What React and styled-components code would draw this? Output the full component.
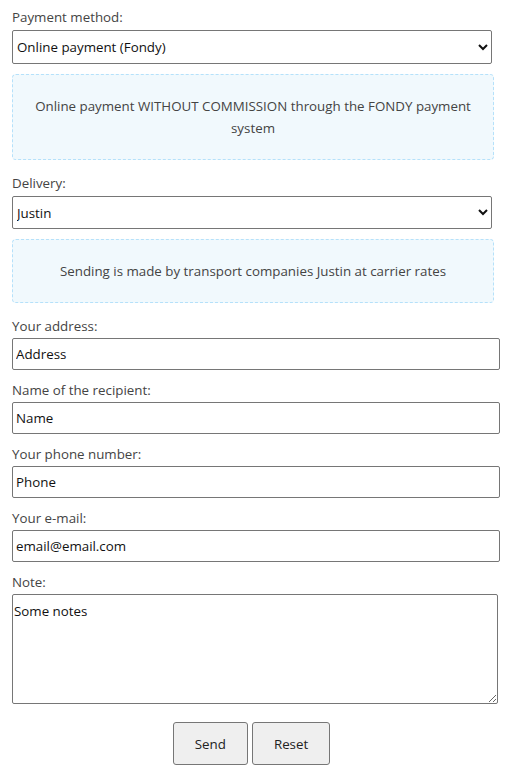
import React from "react";
import styled, { createGlobalStyle } from "styled-components";

const Global = createGlobalStyle`
  html, body { margin: 0; padding: 0; background: #fff; }
  body { font-family: "Open Sans", "Noto Sans", sans-serif; font-size: 13.33px; color: #333; }
`;

const Form = styled.form`
  display: flex;
  flex-direction: column;
  padding: 8px 12px 12px 12px;
  width: 511px;
  box-sizing: border-box;
`;

const Field = styled.div`
  display: flex;
  flex-direction: column;
  margin-bottom: ${(p) => p.$mb ?? 11}px;
`;

const Label = styled.label`
  display: block;
  font-size: 13.33px;
  line-height: 18px;
  color: #444;
  margin-bottom: ${(p) => p.$mb ?? 3}px;
`;

const Select = styled.select`
  width: 480px;
  height: ${(p) => p.$h ?? 34}px;
  box-sizing: border-box;
  font-family: "Open Sans", "Noto Sans", sans-serif;
  font-size: 13.33px;
  color: #111;
  background: #fff;
  border: 1px solid #767676;
  border-radius: 2px;
  padding: 0;
  margin: 0;
`;

const Info = styled.div`
  width: 482px;
  box-sizing: border-box;
  margin-top: 10px;
  padding: 20px 16px;
  background: #f1f9fd;
  border: 1px dashed #b5e1fa;
  border-radius: 4px;
  text-align: center;
  font-size: 13.33px;
  line-height: 22px;
  color: #444;
`;

const Input = styled.input`
  width: 488px;
  height: 32px;
  box-sizing: border-box;
  font-family: "Open Sans", "Noto Sans", sans-serif;
  font-size: 13.33px;
  color: #111;
  border: 1px solid #767676;
  border-radius: 2px;
  padding: 0 3px;
  margin: 0;
  &::placeholder { color: #111; opacity: 1; }
`;

const TextArea = styled.textarea`
  width: 486px;
  height: 110px;
  box-sizing: border-box;
  font-family: "Open Sans", "Noto Sans", sans-serif;
  font-size: 13.33px;
  line-height: 18px;
  color: #111;
  border: 1px solid #767676;
  border-radius: 2px;
  padding: 7px 1px;
  margin: 0;
  &::placeholder { color: #111; opacity: 1; }
`;

const Buttons = styled.div`
  display: flex;
  justify-content: center;
  gap: 4px;
  margin-top: 7px;
  padding-right: 8px;
`;

const Button = styled.button`
  height: 43px;
  padding: 0 21px;
  box-sizing: border-box;
  font-family: "Open Sans", "Noto Sans", sans-serif;
  font-size: 13.33px;
  color: #222;
  background: #efefef;
  border: 1px solid #767676;
  border-radius: 3px;
  cursor: pointer;
`;

export default function App() {
  return (
    <>
      <Global />
      <Form onSubmit={(e) => e.preventDefault()}>
        <Field $mb={14}>
          <Label $mb={4}>Payment method:</Label>
          <Select defaultValue="fondy">
            <option value="fondy">Online payment (Fondy)</option>
            <option value="cash">Cash on delivery</option>
          </Select>
          <Info>Online payment WITHOUT COMMISSION through the FONDY payment system</Info>
        </Field>
        <Field $mb={14}>
          <Label $mb={4}>Delivery:</Label>
          <Select defaultValue="justin" $h={33}>
            <option value="justin">Justin</option>
            <option value="np">Nova Poshta</option>
          </Select>
          <Info>Sending is made by transport companies Justin at carrier rates</Info>
        </Field>
        <Field>
          <Label>Your address:</Label>
          <Input placeholder="Address" />
        </Field>
        <Field>
          <Label>Name of the recipient:</Label>
          <Input placeholder="Name" />
        </Field>
        <Field>
          <Label>Your phone number:</Label>
          <Input placeholder="Phone" />
        </Field>
        <Field>
          <Label>Your e-mail:</Label>
          <Input placeholder="email@email.com" />
        </Field>
        <Field $mb={11}>
          <Label $mb={3}>Note:</Label>
          <TextArea placeholder="Some notes" />
        </Field>
        <Buttons>
          <Button type="submit">Send</Button>
          <Button type="reset">Reset</Button>
        </Buttons>
      </Form>
    </>
  );
}
